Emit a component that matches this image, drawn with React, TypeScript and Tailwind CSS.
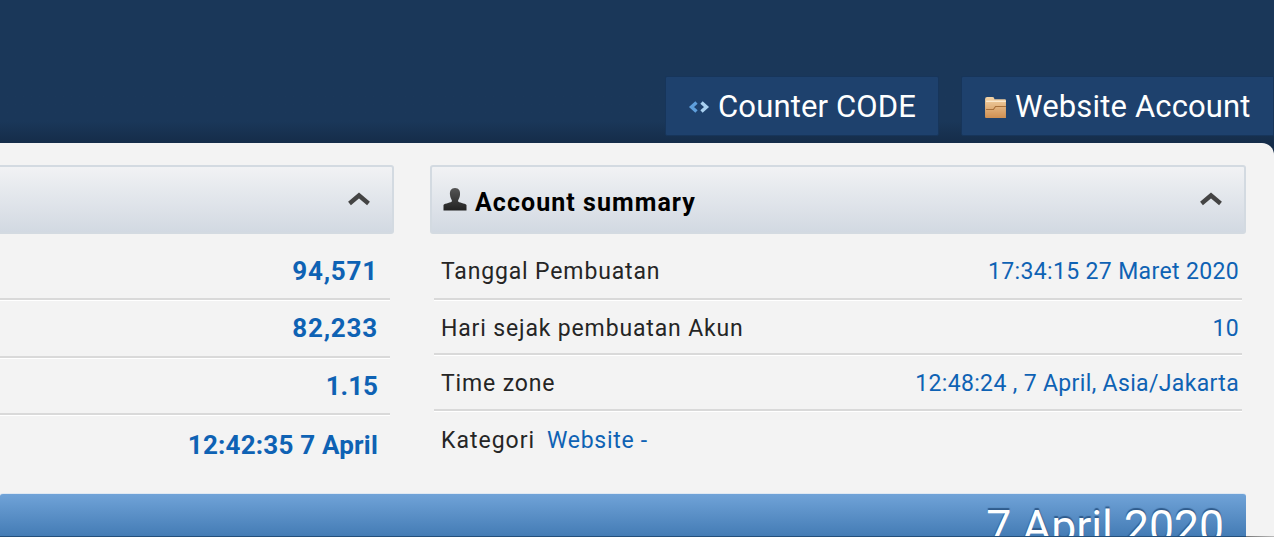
import React from "react";

type Row = { label?: string; value: string; cls: string };

const leftRows: Row[] = [
  { value: "94,571", cls: "h-[66px] pt-[11px] tracking-[0.8px]" },
  { value: "82,233", cls: "h-[58px] pt-[1px] tracking-[0.8px]" },
  { value: "1.15", cls: "h-[57px] pt-[1px] tracking-[0px]" },
  { value: "12:42:35 7 April", cls: "h-[60px] pt-[1px] tracking-[0.2px]" },
];

const rightRows: Row[] = [
  { label: "Tanggal Pembuatan", value: "17:34:15 27 Maret 2020", cls: "h-[66px] pt-[12px]" },
  { label: "Hari sejak pembuatan Akun", value: "10", cls: "h-[55px] pt-[5px]" },
  { label: "Time zone", value: "12:48:24 , 7 April, Asia/Jakarta", cls: "h-[56px] pt-[4px]" },
];

function CodeIcon() {
  return (
    <svg width="22" height="14" viewBox="0 0 22 14" className="blur-[0.6px]">
      <path d="M8.5 2.5 L3.5 7 L8.5 11.5" fill="none" stroke="#5f9fdc" strokeWidth="3.4" />
      <path d="M13.5 2.5 L18.5 7 L13.5 11.5" fill="none" stroke="#a9d0f0" strokeWidth="3.4" />
    </svg>
  );
}

function FolderIcon() {
  return (
    <svg width="23" height="23" viewBox="0 0 22 22" className="blur-[0.3px]">
      <defs>
        <linearGradient id="folder" x1="0" y1="0" x2="0" y2="1">
          <stop offset="0" stopColor="#f3d3a6" />
          <stop offset="1" stopColor="#cf8f52" />
        </linearGradient>
      </defs>
      <path d="M1 3 Q1 1 3 1 H8 Q10 1 10 3 H20 Q21 3 21 4 V21 H2 Q1 21 1 20 Z" fill="url(#folder)" />
      <path d="M2 13 H9 L11 10 H21" fill="none" stroke="#a8703a" strokeWidth="1" />
      <path d="M2 5 H21" fill="none" stroke="#fff3df" strokeWidth="1" />
    </svg>
  );
}

function UserIcon() {
  return (
    <svg width="24" height="23" viewBox="0 0 24 23" className="blur-[0.3px]">
      <defs>
        <linearGradient id="user" x1="0" y1="0" x2="0" y2="1">
          <stop offset="0" stopColor="#555555" />
          <stop offset="1" stopColor="#222222" />
        </linearGradient>
      </defs>
      <path
        d="M12 0 C16 0 17.5 3 17 7 C16.7 10 15.3 11.5 15 13 C15.5 15 22 15 23.5 17 L23.5 22.5 H0.5 L0.5 17 C2 15 8.5 15 9 13 C8.7 11.5 7.3 10 7 7 C6.5 3 8 0 12 0 Z"
        fill="url(#user)"
      />
    </svg>
  );
}

function ChevronUp() {
  return (
    <svg width="24" height="14" viewBox="0 0 24 14" className="mb-[2px] blur-[0.5px]">
      <path d="M2.5 11.5 L12 3.5 L21.5 11.5" fill="none" stroke="#444444" strokeWidth="4.4" />
    </svg>
  );
}

function PanelHeader({ children }: { children?: React.ReactNode }) {
  return (
    <div className="flex h-[69px] items-center justify-between rounded-[3px] border-2 border-[#d3dae1] bg-gradient-to-b from-[#f1f2f4] to-[#d2d9e2] pl-[11px] pr-[21px]">
      <div className="flex items-center gap-[8px]">{children}</div>
      <ChevronUp />
    </div>
  );
}

export default function App() {
  return (
    <div className="flex h-[537px] w-[1274px] flex-col overflow-hidden bg-[#152c49] font-['Roboto',sans-serif]">
      {/* ヘッダー */}
      <div className="flex h-[143px] shrink-0 items-start justify-end gap-[22px] bg-gradient-to-b from-[#1a3759] from-85% to-[#152c49] pt-[76px]">
        <div className="flex h-[60px] w-[274px] items-center gap-[8px] rounded-[2px] border border-[#17355a] bg-[#1e416d] pl-[22px] pt-[2px] text-[31px] tracking-[0.15px] text-white">
          <CodeIcon />
          <span>Counter CODE</span>
        </div>
        <div className="flex h-[60px] w-[313px] items-center gap-[8px] rounded-l-[2px] border border-[#17355a] bg-[#1e416d] pl-[22px] pt-[2px] text-[31px] tracking-[0.15px] text-white">
          <FolderIcon />
          <span>Website Account</span>
        </div>
      </div>

      {/* 本文 */}
      <div className="flex-1 overflow-hidden rounded-tr-[12px] bg-[#f3f3f3] pt-[22px]">
        <div className="flex gap-[36px]">
          {/* 左パネル */}
          <div className="-ml-[6px] w-[400px] shrink-0">
            <PanelHeader />
            <div className="pr-[4px]">
              {leftRows.map((row, i) => (
                <div
                  key={row.value}
                  className={`flex items-center justify-end pr-[12px] text-[26px] font-bold text-[#0e62b4] ${row.cls} ${
                    i < leftRows.length - 1 ? "border-b-2 border-[#d9d9d9] shadow-[0_1px_0_#ffffff]" : ""
                  }`}
                >
                  {row.value}
                </div>
              ))}
            </div>
          </div>

          {/* 右パネル */}
          <div className="w-[816px] shrink-0">
            <PanelHeader>
              <UserIcon />
              <span className="pt-[7px] text-[25px] font-bold tracking-[1.05px] text-black">Account summary</span>
            </PanelHeader>
            <div className="px-[4px]">
              {rightRows.map((row) => (
                <div
                  key={row.value}
                  className={`flex items-center justify-between border-b-2 border-[#d9d9d9] px-[7px] pr-[3px] text-[23px] shadow-[0_1px_0_#ffffff] ${row.cls}`}
                >
                  <span className="tracking-[0.85px] text-[#252525]">{row.label}</span>
                  <span className="tracking-[0.35px] text-[#0e62b4]">{row.value}</span>
                </div>
              ))}
              <div className="flex h-[58px] items-center gap-[12px] px-[7px] pt-[2px] text-[23px]">
                <span className="tracking-[1px] text-[#252525]">Kategori</span>
                <span className="tracking-[0.7px] text-[#0e62b4]">Website -</span>
              </div>
            </div>
          </div>
        </div>

        {/* 日付バー */}
        <div className="mt-[18px] flex items-end">
          <div className="h-[44px] flex-1 overflow-hidden rounded-t-[3px] border-t border-b border-t-[#dfe8f2] border-b-[#24507c] bg-gradient-to-b from-[#70a3d8] to-[#447cb5] pr-[22px] text-right text-[44.5px] leading-[66px] text-white [text-shadow:0_-2px_1px_#2f5b8c]">
            7 April 2020
          </div>
          <div className="h-px w-[28px] bg-gradient-to-r from-[#777777] to-[#bbbbbb]" />
        </div>
      </div>
    </div>
  );
}
